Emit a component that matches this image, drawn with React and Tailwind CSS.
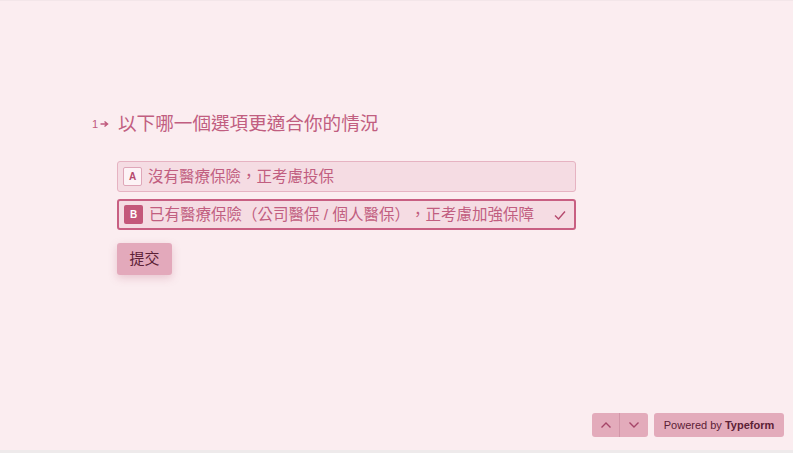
import React from "react";

const options = [
  { key: "A", label: "沒有醫療保險，正考慮投保", selected: false },
  { key: "B", label: "已有醫療保險（公司醫保 / 個人醫保），正考慮加強保障", selected: true },
];

const Option = ({ item }) => (
  <div
    className={
      "flex items-center h-[31px] rounded-[3px] px-[5px] bg-[#f5dce3] " +
      (item.selected ? "border-2 border-[#c85f82]" : "border border-[#e6b3c2]")
    }
  >
    <span
      className={
        "w-[19px] h-[19px] flex items-center justify-center text-[10px] font-bold rounded-[2px] " +
        (item.selected
          ? "bg-[#c4577a] text-white"
          : "bg-[#fdf3f6] text-[#b5496d] border border-[#dfa7b9]")
      }
    >
      {item.key}
    </span>
    <span className="ml-[6px] text-[15.5px] text-[#c15e80] flex-1 leading-none [text-spacing-trim:space-all]">
      {item.label}
    </span>
    {item.selected && (
      <svg width="14" height="14" viewBox="0 0 14 14" className="mr-[2px]">
        <path d="M2 7.5 L5.5 11 L12 3.5" fill="none" stroke="#b5496d" strokeWidth="1.4" />
      </svg>
    )}
  </div>
);

export default function App() {
  return (
    <div
      lang="zh-Hant-TW"
      className="w-[793px] h-[453px] bg-[#fbedf0] flex flex-col overflow-hidden"
      style={{ fontFamily: '"Liberation Sans", "Noto Sans CJK TC", sans-serif' }}
    >
      <div className="flex-1 flex flex-col border-t border-[#f3e6e9] relative">
        <div className="pt-[110px] pl-[92px] flex items-center">
          <span className="text-[11px] text-[#c05a7d] w-[26px] flex items-center">
            1
            <svg width="9" height="8" viewBox="0 0 9 8" className="ml-[2px]">
              <path d="M0.5 4 H7 M4.5 1.5 L7.5 4 L4.5 6.5" fill="none" stroke="#c05a7d" strokeWidth="1.5" />
            </svg>
          </span>
          <span className="text-[18.6px] text-[#c15e80] leading-[26px]">以下哪一個選項更適合你的情況</span>
        </div>

        <div className="ml-[117px] mt-[24px] w-[459px] flex flex-col gap-[7px]">
          {options.map((o) => (
            <Option key={o.key} item={o} />
          ))}
        </div>

        <div className="ml-[117px] mt-[13px]">
          <button className="w-[55px] h-[32px] rounded-[3px] bg-[#e3a9bb] text-[#5c2136] text-[15px] shadow-[0_3px_8px_rgba(180,80,110,0.25)]">
            提交
          </button>
        </div>

        <div className="absolute right-[9px] bottom-[13px] flex gap-[6px]">
          <div className="flex h-[24px] rounded-[3px] overflow-hidden bg-[#e3abbb]">
            <button className="w-[28px] flex items-center justify-center border-r border-[#d295a8]">
              <svg width="12" height="8" viewBox="0 0 12 8">
                <path d="M1.5 6.5 L6 2 L10.5 6.5" fill="none" stroke="#a54568" strokeWidth="1.4" />
              </svg>
            </button>
            <button className="w-[28px] flex items-center justify-center">
              <svg width="12" height="8" viewBox="0 0 12 8">
                <path d="M1.5 1.5 L6 6 L10.5 1.5" fill="none" stroke="#a54568" strokeWidth="1.4" />
              </svg>
            </button>
          </div>
          <div className="h-[24px] w-[130px] rounded-[3px] bg-[#e3abbb] flex items-center justify-center text-[11px] text-[#5c2136]">
            Powered by&nbsp;<span className="font-bold">Typeform</span>
          </div>
        </div>
      </div>
      <div className="h-[3px] bg-[#eeeaeb]" />
    </div>
  );
}
